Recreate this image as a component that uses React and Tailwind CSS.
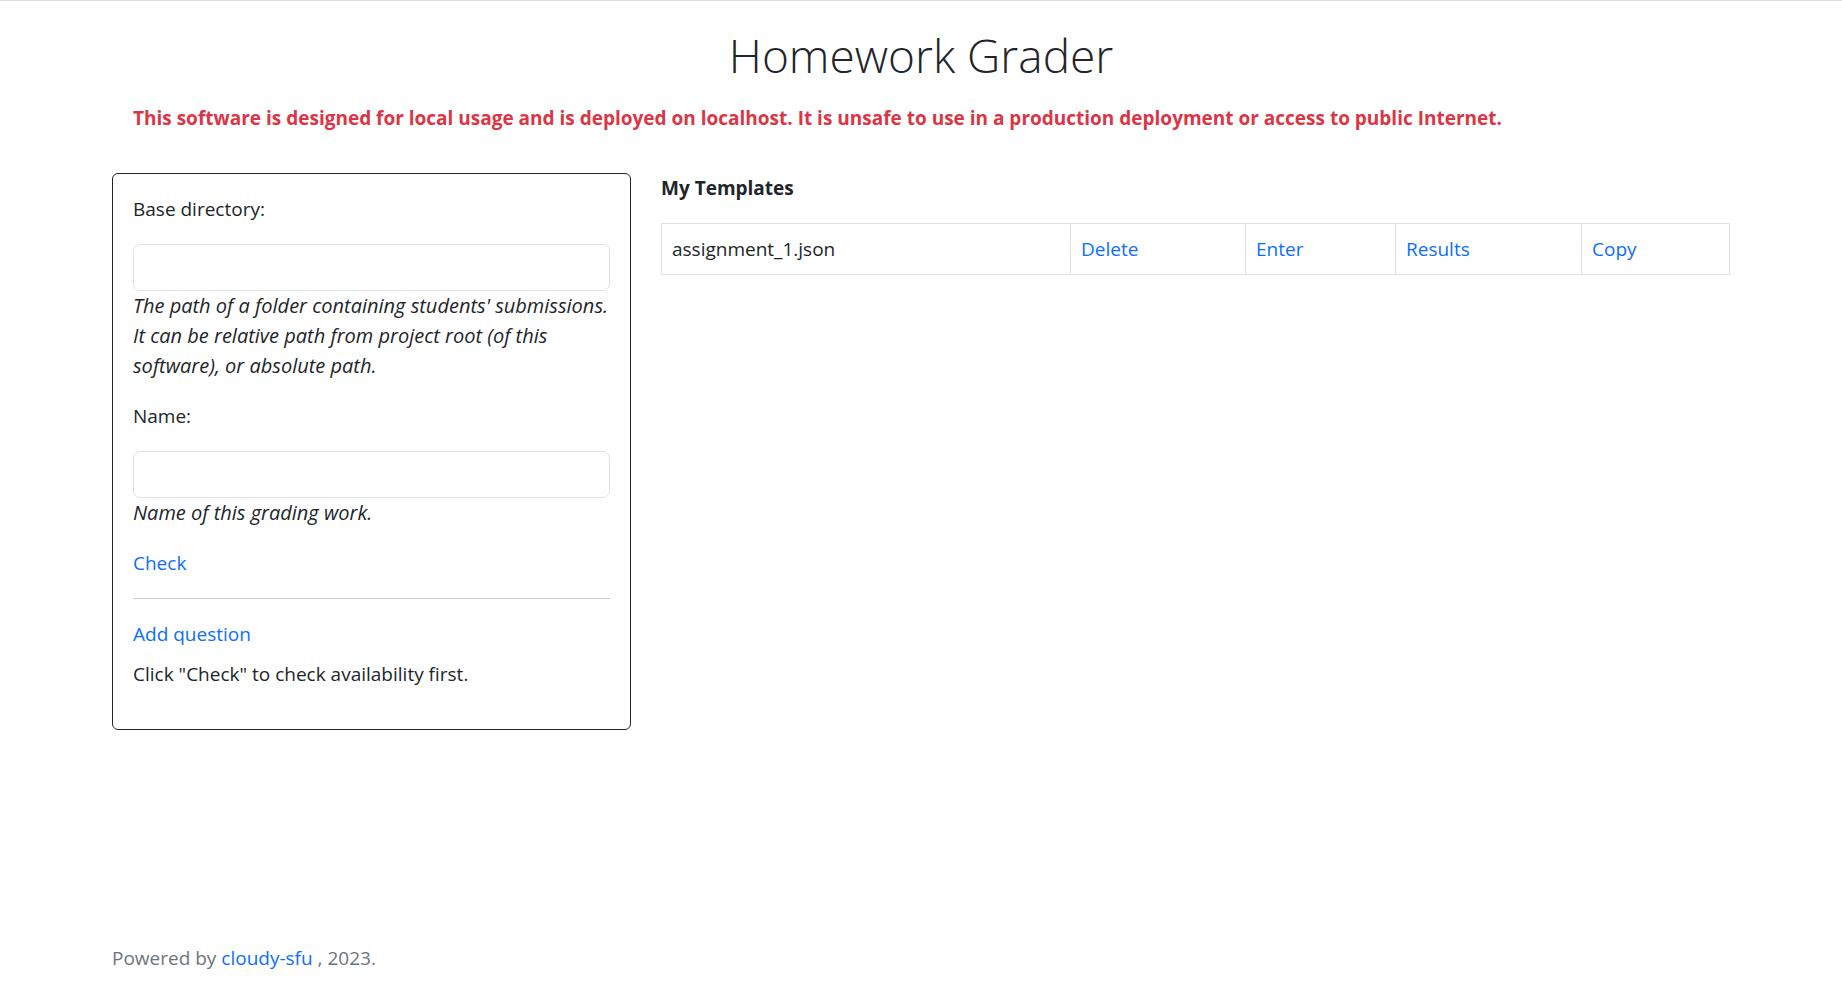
export default function App() {
  const templates = ["assignment_1.json"];

  return (
    <div className="min-h-screen flex flex-col bg-white text-[#212529] font-['Open_Sans',sans-serif] text-[19px] leading-[30px]">
      <div className="h-px bg-[#dcdcdc]" />

      <h1 className="mt-[24px] text-center text-[46px] leading-[60px] font-light">
        Homework Grader
      </h1>

      <p className="mt-[18px] pl-[133px] font-bold text-[#dc3545]">
        This software is designed for local usage and is deployed on localhost. It is unsafe to use in a production deployment or access to public Internet.
      </p>

      <div className="mt-[40px] px-[112px] flex gap-[30px] items-start">
        {/* New template form */}
        <div className="w-[519px] shrink-0 border border-[#212529] rounded-[6px] p-5">
          <p>Base directory:</p>
          <input
            type="text"
            className="mt-5 block w-full h-[47px] px-[15px] border border-[#dee2e6] rounded-[7px] outline-none"
          />
          <p className="italic text-[20px]">
            The path of a folder containing students' submissions. It can be relative path from project root (of this software), or absolute path.
          </p>

          <p className="mt-5">Name:</p>
          <input
            type="text"
            className="mt-5 block w-full h-[47px] px-[15px] border border-[#dee2e6] rounded-[7px] outline-none"
          />
          <p className="italic text-[20px]">Name of this grading work.</p>

          <button type="button" className="mt-5 block text-[#0d6efd]">
            Check
          </button>

          <hr className="my-5 border-0 h-px bg-[#c8c9ca]" />

          <button type="button" className="block text-[#0d6efd]">
            Add question
          </button>
          <p className="mt-[10px] mb-5">Click "Check" to check availability first.</p>
        </div>

        {/* Template list */}
        <div className="flex-1">
          <h6 className="font-bold mb-5">My Templates</h6>
          <table className="w-full table-fixed border-collapse">
            <tbody>
              {templates.map((t) => (
                <tr key={t}>
                  <td className="w-[409px] border border-[#dee2e6] px-[10px] py-[10px]">{t}</td>
                  <td className="w-[175px] border border-[#dee2e6] px-[10px] py-[10px] text-[#0d6efd]">Delete</td>
                  <td className="w-[150px] border border-[#dee2e6] px-[10px] py-[10px] text-[#0d6efd]">Enter</td>
                  <td className="w-[186px] border border-[#dee2e6] px-[10px] py-[10px] text-[#0d6efd]">Results</td>
                  <td className="border border-[#dee2e6] px-[10px] py-[10px] text-[#0d6efd]">Copy</td>
                </tr>
              ))}
            </tbody>
          </table>
        </div>
      </div>

      <footer className="mt-auto px-[112px] pb-[19px] text-[#6c757d]">
        Powered by <a className="text-[#0d6efd]">cloudy-sfu</a> , 2023.
      </footer>
    </div>
  );
}
